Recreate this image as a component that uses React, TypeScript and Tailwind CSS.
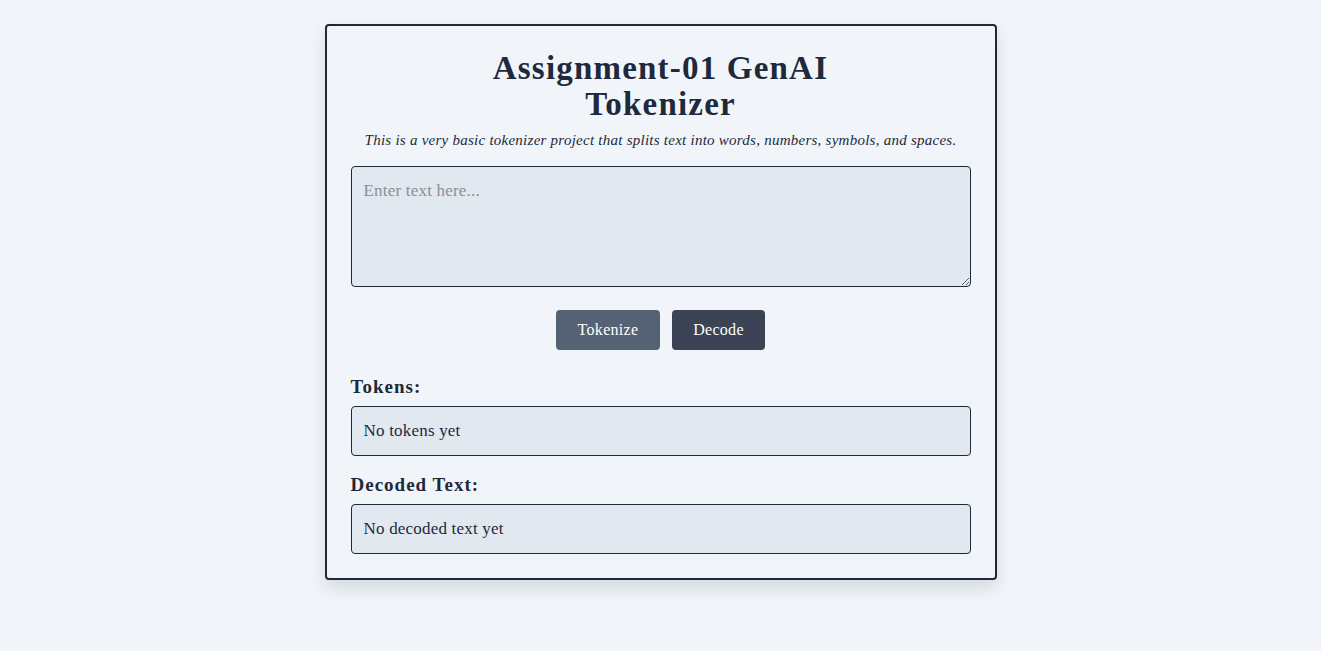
import { useState } from 'react';

export default function App() {
  const [text, setText] = useState('');
  const [tokens, setTokens] = useState<number[]>([]);
  const [decoded, setDecoded] = useState('');

  // very small tokenizer: words, numbers, symbols, spaces
  const handleTokenize = () => {
    const parts = text.match(/\w+|\s+|[^\w\s]/g) || [];
    setTokens(parts.map((p) => p.split('').reduce((a, c) => a + c.charCodeAt(0), 0)));
  };

  const handleDecode = () => {
    setDecoded(text);
  };

  return (
    <div
      className="min-h-screen bg-[#f1f5f9] text-[#1e293b] pt-6"
      style={{ fontFamily: '"Liberation Serif", "DejaVu Serif", serif' }}
    >
      <div className="mx-auto w-[672px] rounded border-2 border-[#1e293b] bg-[#f1f5f9] p-6 shadow-[0_8px_16px_rgba(15,23,42,0.12)]">
        <h1 className="text-center text-[33px] font-bold leading-9 tracking-[1.2px]">
          Assignment-01 GenAI
          <br />
          Tokenizer
        </h1>
        <p className="mt-2 text-center text-[15px] italic leading-5 tracking-[0.25px]">
          This is a very basic tokenizer project that splits text into words, numbers, symbols, and spaces.
        </p>

        <textarea
          value={text}
          onChange={(e) => setText(e.target.value)}
          placeholder="Enter text here..."
          className="mt-4 block h-[121px] w-full rounded border border-[#1e293b] bg-[#e2e8f0] p-3 text-[17px] leading-6 tracking-[0.2px] placeholder:text-[#8b8f96] focus:outline-none"
        />

        <div className="mt-[23px] flex justify-center gap-3">
          <button
            onClick={handleTokenize}
            className="h-10 w-[104px] rounded bg-[#556274] text-base tracking-[0.3px] text-white"
          >
            Tokenize
          </button>
          <button
            onClick={handleDecode}
            className="h-10 w-[93px] rounded bg-[#3c4355] text-base tracking-[0.3px] text-white"
          >
            Decode
          </button>
        </div>

        {/* 结果 */}
        <h3 className="mt-[23px] text-[19px] font-bold leading-7 tracking-[1px]">Tokens:</h3>
        <div className="mt-[5px] rounded border border-[#1e293b] bg-[#e2e8f0] p-3 text-[17px] leading-6 tracking-[0.2px]">
          {tokens.length > 0 ? tokens.join(', ') : 'No tokens yet'}
        </div>

        <h3 className="mt-[15px] text-[19px] font-bold leading-7 tracking-[1px]">Decoded Text:</h3>
        <div className="mt-[5px] rounded border border-[#1e293b] bg-[#e2e8f0] p-3 text-[17px] leading-6 tracking-[0.2px]">
          {decoded || 'No decoded text yet'}
        </div>
      </div>
    </div>
  );
}
